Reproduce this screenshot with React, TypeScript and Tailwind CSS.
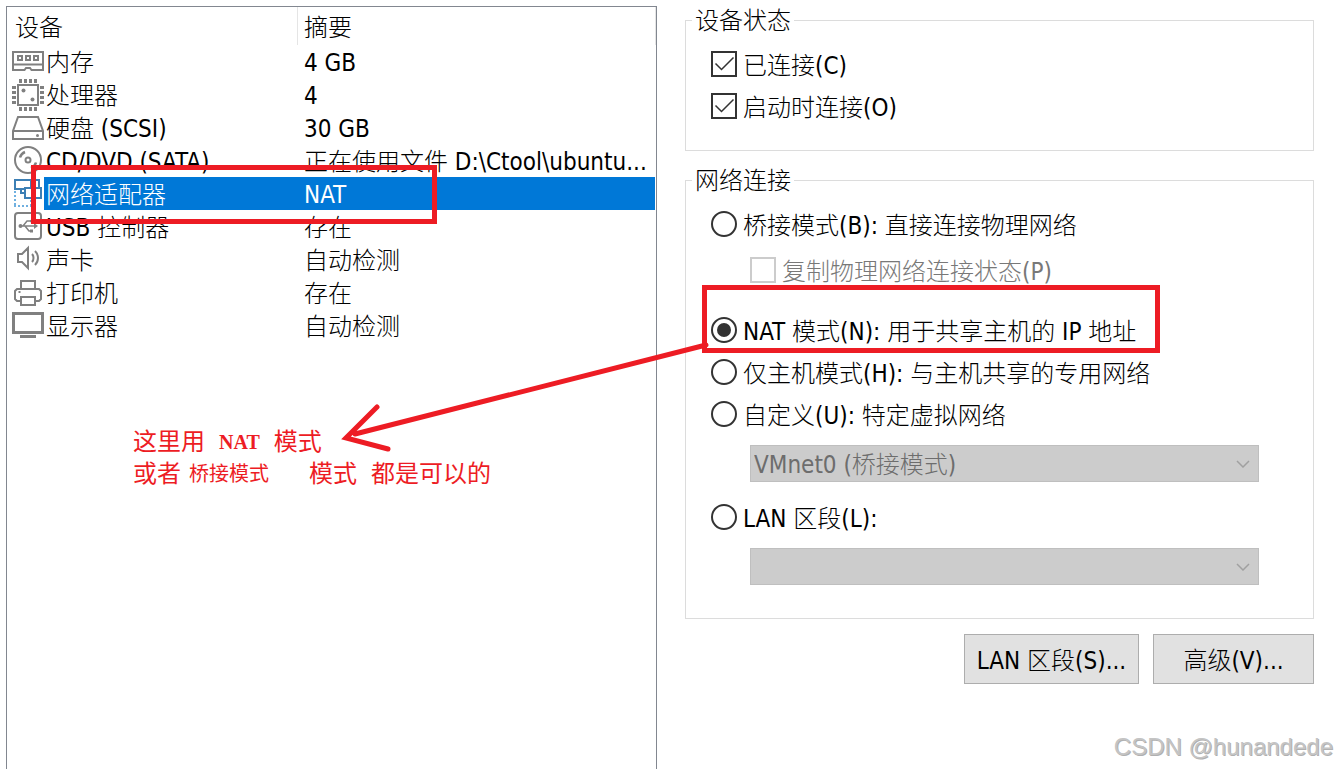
import type { ReactNode } from 'react';

type Device = { name: string; summary: string; icon: ReactNode; selected?: boolean };

const DEVICES: Device[] = [
  {
    name: '内存',
    summary: '4 GB',
    icon: (
      <>
        <path d="M1 6h30v18H19.500l-1.500-2h-4l-1.500 2H1z M1 18.500h30" />
        <path d="M6 10h4v4H6z M14 10h4v4h-4z M22 10h4v4h-4z" />
      </>
    ),
  },
  {
    name: '处理器',
    summary: '4',
    icon: (
      <>
        <path d="M6 6h20v20H6z" />
        <path d="M8.500 0v4M13.500 0v4M18.500 0v4M23.500 0v4M8.500 28v4M13.500 28v4M18.500 28v4M23.500 28v4" strokeWidth="3" />
        <path d="M0 8.500h4M0 13.500h4M0 18.500h4M0 23.500h4M28 8.500h4M28 13.500h4M28 18.500h4M28 23.500h4" strokeWidth="3" />
        <circle cx="11.500" cy="11.500" r="2" fill="currentColor" stroke="none" />
        <circle cx="20.500" cy="20.500" r="2" fill="currentColor" stroke="none" />
      </>
    ),
  },
  {
    name: '硬盘 (SCSI)',
    summary: '30 GB',
    icon: (
      <>
        <path d="M6 5h20l5 14v8H1v-8z M1 19h30" />
        <circle cx="25.500" cy="23.500" r="1.500" fill="currentColor" stroke="none" />
      </>
    ),
  },
  {
    name: 'CD/DVD (SATA)',
    summary: '正在使用文件 D:\\Ctool\\ubuntu...',
    icon: (
      <>
        <circle cx="16" cy="15" r="13" />
        <circle cx="16" cy="15" r="2.500" />
        <path d="M8 12.500a8.500 8.500 0 0 1 5-5.500M24 17.500a8.500 8.500 0 0 1-5 5.500" strokeWidth="2.500" />
      </>
    ),
  },
  {
    name: '网络适配器',
    summary: 'NAT',
    selected: true,
    icon: (
      <g className="text-[#3c7fb5]" stroke="currentColor">
        <path d="M3 13v15M2 28h18M19 22v6" stroke="#6fb0e0" strokeDasharray="2 2" />
        <path d="M3 2h16v9H3z" />
        <path d="M19 2h8v7" />
        <path d="M13 10h16v10H13z" fill="white" />
        <path d="M9 11v4h4" />
      </g>
    ),
  },
  {
    name: 'USB 控制器',
    summary: '存在',
    icon: (
      <>
        <rect x="3" y="2" width="26" height="26" rx="3" />
        <path d="M8 15h16M11 15l4-5h4M13 15l4 5h3" strokeWidth="1.500" />
        <circle cx="8.500" cy="15" r="2" fill="currentColor" stroke="none" />
        <path d="M22 12l4 3-4 3z" fill="currentColor" stroke="none" />
        <circle cx="19.500" cy="10" r="1.500" fill="currentColor" stroke="none" />
        <path d="M18 18.500h3v3h-3z" fill="currentColor" stroke="none" />
      </>
    ),
  },
  {
    name: '声卡',
    summary: '自动检测',
    icon: (
      <>
        <path d="M6 10h4l6-6v20l-6-6H6z" />
        <path d="M20 10c2 2 2 6 0 8M23 7c4 4 4 10 0 14" />
      </>
    ),
  },
  {
    name: '打印机',
    summary: '存在',
    icon: (
      <>
        <path d="M9 12V4h14v8M9 24H5l-2-2v-8l2-2h22l2 2v8l-2 2h-4M9 20h14v8H9z" />
        <path d="M6.500 15h2" />
      </>
    ),
  },
  {
    name: '显示器',
    summary: '自动检测',
    icon: (
      <>
        <path d="M1.500 3.500h29v19h-29z" strokeWidth="3" />
        <path d="M8 26.500h16" strokeWidth="3" />
      </>
    ),
  },
];

function CheckBox({ label, checked, disabled }: { label: string; checked?: boolean; disabled?: boolean }) {
  return (
    <label className="flex h-[42px] items-center gap-[6px] whitespace-nowrap has-disabled:text-[#787878]">
      <span className="grid shrink-0">
        <input
          type="checkbox"
          defaultChecked={checked}
          disabled={disabled}
          className="peer col-start-1 row-start-1 size-[26px] appearance-none border-2 border-[#333] bg-white disabled:border-[#ccc]"
        />
        <svg viewBox="0 0 26 26" className="pointer-events-none col-start-1 row-start-1 hidden size-[26px] peer-checked:block" fill="none" stroke="#333" strokeWidth="1.500">
          <path d="M4.500 12.500l6 6L22.500 6.500" />
        </svg>
      </span>
      <span className="pt-[3px]">{label}</span>
    </label>
  );
}

function Radio({ label, checked }: { label: string; checked?: boolean }) {
  return (
    <label className="flex h-[42px] items-center gap-[6px] whitespace-nowrap">
      <span className="grid shrink-0 place-items-center">
        <input
          type="radio"
          name="network"
          defaultChecked={checked}
          className="peer col-start-1 row-start-1 size-[26px] appearance-none rounded-full border-2 border-[#333] bg-white"
        />
        <span className="pointer-events-none col-start-1 row-start-1 hidden size-[14px] rounded-full bg-[#333] peer-checked:block" />
      </span>
      <span className="pt-[3px]">{label}</span>
    </label>
  );
}

function Select({ label, value }: { label: string; value: string }) {
  return (
    <div className="mt-[10px] mr-[54px] ml-[64px] grid items-center">
      <select
        aria-label={label}
        disabled
        className="col-start-1 row-start-1 h-[37px] w-full appearance-none border border-[#bfbfbf] bg-[#ccc] px-[3px] pt-[2px] text-[#6d6d6d] opacity-100"
      >
        <option>{value}</option>
      </select>
      <svg viewBox="0 0 14 8" className="pointer-events-none col-start-1 row-start-1 mr-[9px] h-[8px] w-[14px] justify-self-end" fill="none" stroke="#a0a0a0" strokeWidth="1.500">
        <path d="M1 1l6 6 6-6" />
      </svg>
    </div>
  );
}

export default function App() {
  return (
    <div className="relative grid h-screen grid-cols-[651fr_629fr] gap-[28px] overflow-hidden bg-white pr-[22px] pl-[6px] font-['DejaVu_Sans_Condensed','Noto_Sans_CJK_SC',sans-serif] text-[24px] leading-[32px] font-light text-black">
      {/* device list */}
      <section className="relative mt-[6px] border border-b-0 border-[#828790]">
        <table className="w-full table-fixed border-separate border-spacing-0 text-left">
          <colgroup>
            <col className="w-[291px]" />
            <col />
          </colgroup>
          <thead>
            <tr className="h-[38px]">
              <th className="border-r border-[#e5e5e5] p-0 pt-[3px] pl-[8px] font-light">设备</th>
              <th className="border-r border-[#e5e5e5] p-0 pt-[3px] pl-[6px] font-light">摘要</th>
            </tr>
          </thead>
          <tbody>
            {DEVICES.map((d) => (
              <tr key={d.name} className={d.selected ? 'leading-[33px] text-white' : 'leading-[33px]'}>
                <td className="p-0 pl-[5px]">
                  <div className="flex h-[33px] items-end whitespace-nowrap">
                    <svg viewBox="0 0 32 32" className="size-[32px] shrink-0 text-[#808080]" fill="none" stroke="currentColor" strokeWidth="2">
                      {d.icon}
                    </svg>
                    <span className={d.selected ? 'h-[33px] flex-1 bg-[#0078d7] pt-[2px] pl-[2px]' : 'h-[33px] flex-1 pt-[2px] pl-[2px]'}>{d.name}</span>
                  </div>
                </td>
                <td className="p-0 pr-px">
                  <div className={d.selected ? 'h-[33px] truncate bg-[#0078d7] pt-[2px] pl-[6px]' : 'h-[33px] truncate pt-[2px] pl-[6px]'}>{d.summary}</div>
                </td>
              </tr>
            ))}
          </tbody>
        </table>

        <div className="pointer-events-none absolute top-[158px] left-[24px] h-[59px] w-[406px] border-5 border-[#ed1c24]" />

        <div className="absolute top-[419px] left-[126px] font-['Liberation_Serif','Noto_Sans_CJK_SC',serif] font-normal whitespace-nowrap text-[#ed1c24]">
          <p className="flex gap-[14px]">
            <span>这里用</span>
            <span className="text-[20px] font-bold">NAT</span>
            <span>模式</span>
          </p>
          <p className="flex">
            <span>或者</span>
            <span className="ml-[8px] text-[20px]">桥接模式</span>
            <span className="ml-[40px]">模式</span>
            <span className="ml-[14px]">都是可以的</span>
          </p>
        </div>
      </section>

      {/* settings */}
      <section className="pt-[4px]">
        <fieldset className="border border-[#dcdcdc] pt-[7px] pb-[23px]">
          <legend className="ml-[6px] h-[32px] px-[3px] leading-[35px]">设备状态</legend>
          <div className="pl-[25px]">
            <CheckBox label="已连接(C)" checked />
            <CheckBox label="启动时连接(O)" checked />
          </div>
        </fieldset>

        <fieldset className="mt-[13px] border border-[#dcdcdc] pt-[7px] pb-[33px]">
          <legend className="ml-[6px] h-[32px] px-[3px] leading-[35px]">网络连接</legend>
          <div className="pl-[25px]">
            <Radio label="桥接模式(B): 直接连接物理网络" />
            <div className="mt-[4px] mb-[18px] pl-[39px]">
              <CheckBox label="复制物理网络连接状态(P)" disabled />
            </div>
            <Radio label="NAT 模式(N): 用于共享主机的 IP 地址" checked />
            <Radio label="仅主机模式(H): 与主机共享的专用网络" />
            <Radio label="自定义(U): 特定虚拟网络" />
          </div>
          <Select label="特定虚拟网络" value="VMnet0 (桥接模式)" />
          <div className="mt-[14px] pl-[25px]">
            <Radio label="LAN 区段(L):" />
          </div>
          <Select label="LAN 区段" value="" />
        </fieldset>

        <div className="mt-[15px] flex justify-end gap-[14px]">
          <button className="h-[50px] w-[175px] border border-[#adadad] bg-[#e1e1e1] pt-[3px] whitespace-nowrap">LAN 区段(S)...</button>
          <button className="h-[50px] w-[161px] border border-[#adadad] bg-[#e1e1e1] pt-[3px] whitespace-nowrap">高级(V)...</button>
        </div>
      </section>

      {/* red marker and arrow over both panels */}
      <svg viewBox="0 0 820 170" className="pointer-events-none absolute top-[285px] left-[340px] h-[170px] w-[820px]" fill="none" stroke="#ed1c24" strokeWidth="5">
        <path d="M364.500 2.500h453v63h-453z" />
        <path d="M366 60L15 149M37 122L6 153L48 164" strokeLinecap="round" />
      </svg>

      <div className="absolute right-[3px] bottom-[6px] font-['Liberation_Sans',sans-serif] text-[24px] font-normal text-[#c4c4c4] [text-shadow:1px_1px_0_#b0b0b0]">CSDN @hunandede</div>
    </div>
  );
}
